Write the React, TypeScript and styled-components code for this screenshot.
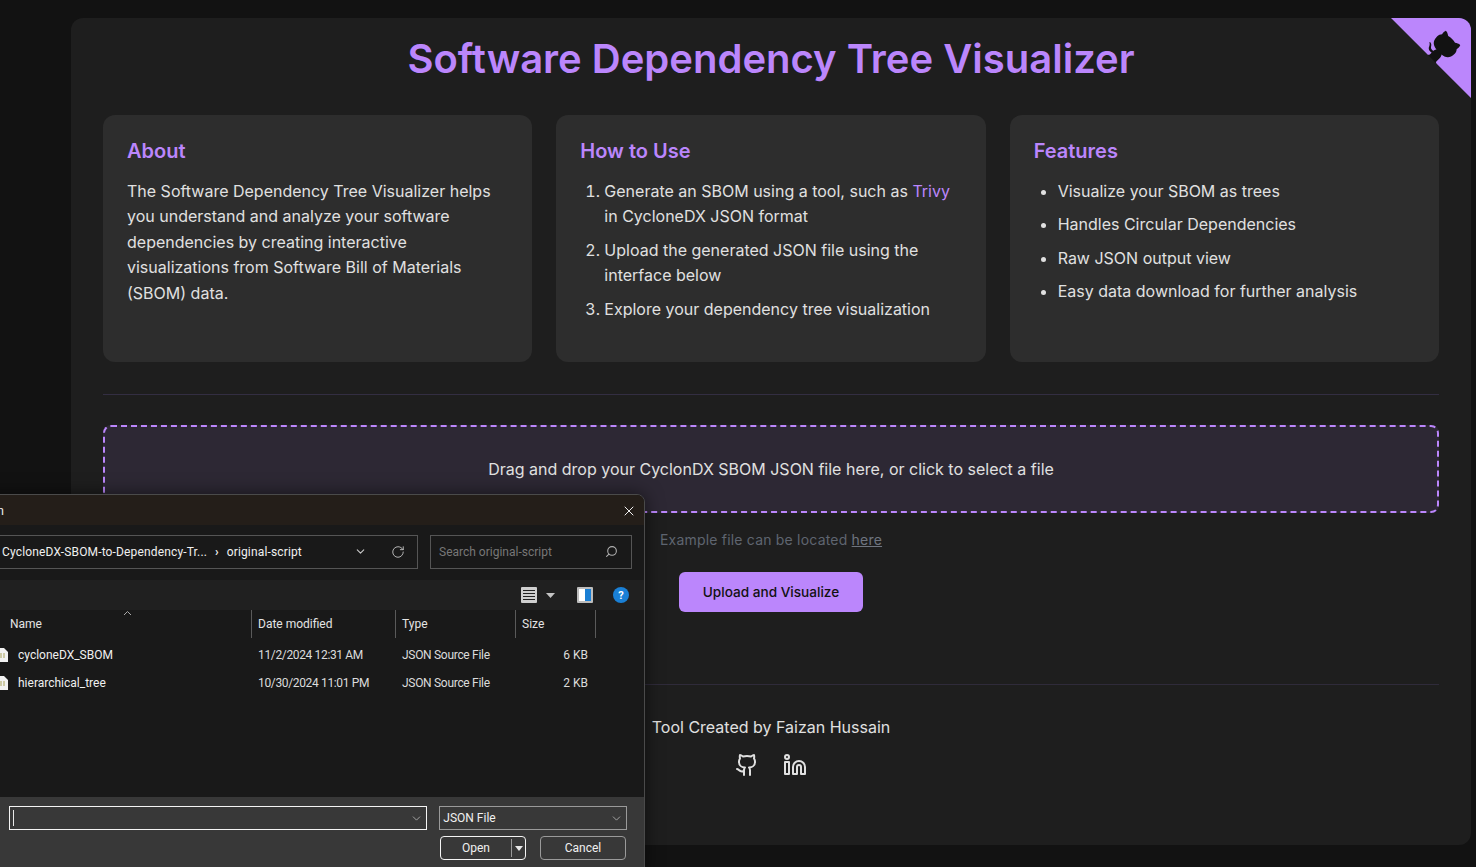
import React from "react";
import styled, { createGlobalStyle } from "styled-components";
import { Github, Linkedin, RotateCw, Search, ChevronDown, X } from "lucide-react";

const GlobalStyle = createGlobalStyle`
  html, body {
    margin: 0;
    padding: 0;
    height: 100%;
    overflow: hidden;
    background: #121212;
  }
  * {
    box-sizing: border-box;
  }
`;

const Page = styled.div`
  position: relative;
  width: 1476px;
  height: 867px;
  overflow: hidden;
  padding: 18px 5px 22px 71px;
  background: #121212;
  font-family: Inter, "Liberation Sans", sans-serif;
  color: #e0e0e0;
`;

const Container = styled.main`
  position: relative;
  height: 827px;
  padding: 0 32px;
  border-radius: 12px;
  background: #1e1e1e;
  overflow: hidden;
`;

const CornerSvg = styled.svg`
  position: absolute;
  top: 0;
  right: 0;
  width: 80px;
  height: 80px;
`;

const Title = styled.h1`
  margin: 0;
  padding-top: 17px;
  height: 97px;
  font-size: 40px;
  line-height: 48px;
  font-weight: 600;
  text-align: center;
  color: #bb86fc;
`;

const CardGrid = styled.section`
  display: grid;
  grid-template-columns: repeat(3, 1fr);
  gap: 24px;
`;

const Card = styled.article`
  height: 247px;
  padding: 24px;
  border-radius: 12px;
  background: #2d2d2d;
`;

const CardTitle = styled.h2`
  margin: 0 0 15.6px;
  font-size: 20px;
  line-height: 24px;
  font-weight: 600;
  color: #bb86fc;
`;

const Paragraph = styled.p`
  margin: 0;
  font-size: 16px;
  line-height: 25.6px;
`;

const List = styled.ol<{ $bullets?: boolean }>`
  margin: 0;
  padding-left: 24px;
  font-size: 16px;
  line-height: 25.6px;
  list-style: ${(p) => (p.$bullets ? "disc" : "decimal")};
  li {
    margin-bottom: 8px;
  }
`;

const Accent = styled.a`
  color: #bb86fc;
`;

const Divider = styled.hr`
  margin: 32px 0 30px;
  border: 0;
  border-top: 1px solid #332e42;
`;

const DropZone = styled.div`
  display: flex;
  align-items: center;
  justify-content: center;
  height: 88px;
  border: 2px dashed #bb86fc;
  border-radius: 8px;
  background: rgba(187, 134, 252, 0.1);
  font-size: 16px;
`;

const ExampleText = styled.p`
  margin: 17px 0 0;
  font-size: 14px;
  line-height: 20px;
  letter-spacing: 0.2px;
  text-align: center;
  color: #5f6570;
  a {
    color: #6f7580;
    text-decoration: underline;
  }
`;

const UploadRow = styled.div`
  display: flex;
  justify-content: center;
  margin-top: 22px;
`;

const UploadButton = styled.button`
  width: 184px;
  height: 40px;
  border: 0;
  border-radius: 6px;
  background: #bb86fc;
  color: #121212;
  font-family: inherit;
  font-size: 13.6px;
  font-weight: 500;
`;

const FooterDivider = styled.hr`
  margin: 72px 0 0;
  border: 0;
  border-top: 1px solid #2f2b3a;
`;

const Credit = styled.p`
  margin: 31px 0 0;
  font-size: 16px;
  line-height: 22px;
  text-align: center;
`;

const SocialRow = styled.div`
  display: flex;
  justify-content: center;
  gap: 24px;
  margin-top: 15px;
  color: #e0e0e0;
`;

/* file picker window lying over the page */
const Dialog = styled.div`
  position: absolute;
  left: -100px;
  top: 494px;
  width: 745px;
  height: 380px;
  display: flex;
  flex-direction: column;
  border: 1px solid #4a4a4a;
  border-radius: 8px 8px 0 0;
  background: #191919;
  box-shadow: 0 0 18px rgba(0, 0, 0, 0.55);
  font-family: Roboto, "Noto Sans", sans-serif;
  font-size: 12px;
  color: #f0f0f0;
  overflow: hidden;
`;

const TitleBar = styled.div`
  flex: none;
  height: 30px;
  display: flex;
  align-items: center;
  justify-content: space-between;
  padding: 1px 7px 0 75px;
  background: #241e19;
  svg {
    color: #f0f0f0;
  }
`;

const AddressRow = styled.div`
  flex: none;
  height: 55px;
  display: flex;
  align-items: center;
  gap: 12px;
  padding: 0 12px 1px 0;
`;

const AddressBox = styled.div`
  flex: none;
  width: 517px;
  height: 34px;
  display: flex;
  align-items: center;
  padding: 0 12px 1px 100px;
  border: 1px solid #555;
  color: #f0f0f0;
`;

const Crumb = styled.span`
  white-space: nowrap;
  letter-spacing: 0.15px;
`;

const CrumbSep = styled.span`
  margin: 0 8px;
  font-weight: 700;
`;

const AddressTools = styled.div`
  margin-left: auto;
  display: flex;
  align-items: center;
  gap: 24px;
  color: #c8c8c8;
`;

const SearchBox = styled.div`
  flex: 1;
  height: 34px;
  display: flex;
  align-items: center;
  justify-content: space-between;
  padding: 0 13px 1px 8px;
  border: 1px solid #555;
  color: #777;
  svg {
    color: #b0b0b0;
    transform: scaleX(-1);
  }
`;

const Toolbar = styled.div`
  flex: none;
  height: 30px;
  display: flex;
  align-items: center;
  justify-content: flex-end;
  padding-right: 15px;
  background: #202020;
`;

const ToolIcon = styled.svg<{ $gap?: number }>`
  display: block;
  margin-left: ${(p) => p.$gap ?? 0}px;
`;

const FileGrid = styled.div`
  display: grid;
  grid-template-columns: 351px 144px 120px 80px;
`;

const HeaderCell = styled.div<{ $sorted?: boolean }>`
  position: relative;
  height: 28px;
  display: flex;
  align-items: center;
  padding-left: ${(p) => (p.$sorted ? "109px" : "6px")};
  border-right: 1px solid #5a5a5a;
  color: #e4e4e4;
`;

const SortCaret = styled.svg`
  position: absolute;
  right: 119px;
  top: 0;
`;

const Rows = styled(FileGrid)`
  padding-top: 3px;
  flex: 1;
  align-content: start;
  grid-auto-rows: 28px;
`;

const NameCell = styled.div`
  display: flex;
  align-items: center;
  gap: 10px;
  padding-left: 96px;
`;

const Cell = styled.div<{ $right?: boolean; $tight?: number }>`
  display: flex;
  align-items: center;
  justify-content: ${(p) => (p.$right ? "flex-end" : "flex-start")};
  padding: ${(p) => (p.$right ? "0 8px 0 0" : "0 0 0 6px")};
  letter-spacing: ${(p) => p.$tight ?? 0}px;
  color: #dcdcdc;
`;

const BottomBar = styled.div`
  flex: none;
  height: 76px;
  padding: 9px 17px 0 108px;
  background: #383838;
`;

const FieldRow = styled.div`
  display: flex;
  gap: 12px;
`;

const Combo = styled.div<{ $active?: boolean }>`
  height: 24px;
  width: ${(p) => (p.$active ? "419px" : "188px")};
  display: flex;
  align-items: center;
  justify-content: space-between;
  padding: 0 3px;
  border: 1px solid ${(p) => (p.$active ? "#f4f4f4" : "#9a9a9a")};
  svg {
    color: #b8b8b8;
  }
`;

const Caret = styled.span`
  width: 1px;
  height: 16px;
  background: #e8e8e8;
`;

const ButtonRow = styled.div`
  display: flex;
  justify-content: flex-end;
  gap: 14px;
  margin: 6px 1px 0 0;
`;

const DialogButton = styled.div<{ $primary?: boolean }>`
  position: relative;
  width: 86px;
  height: 24px;
  display: flex;
  align-items: center;
  justify-content: center;
  padding-right: ${(p) => (p.$primary ? "14px" : "0")};
  border: 1px solid ${(p) => (p.$primary ? "#f4f4f4" : "#9a9a9a")};
  border-radius: 4px;
`;

const SplitArrow = styled.span`
  position: absolute;
  right: 0;
  top: 2px;
  bottom: 2px;
  width: 14px;
  display: flex;
  align-items: center;
  justify-content: center;
  border-left: 1px solid #9a9a9a;
  &::after {
    content: "";
    border-left: 4px solid transparent;
    border-right: 4px solid transparent;
    border-top: 5px solid #e8e8e8;
  }
`;

const FileIcon = () => (
  <svg width="11" height="14" viewBox="0 0 11 14">
    <path d="M0 0h7l4 4v10H0z" fill="#f2f2f2" />
    <path d="M4 5v5M7 5v5" stroke="#a9a35a" strokeWidth="1" />
  </svg>
);

const files = [
  { name: "cycloneDX_SBOM", date: "11/2/2024 12:31 AM", type: "JSON Source File", size: "6 KB" },
  { name: "hierarchical_tree", date: "10/30/2024 11:01 PM", type: "JSON Source File", size: "2 KB" },
];

const FileDialog = () => (
  <Dialog>
    <TitleBar>
      <span>Open</span>
      <X size={16} strokeWidth={1.5} />
    </TitleBar>
    <AddressRow>
      <AddressBox>
        <Crumb>CycloneDX-SBOM-to-Dependency-Tr...</Crumb>
        <CrumbSep>›</CrumbSep>
        <Crumb>original-script</Crumb>
        <AddressTools>
          <ChevronDown size={13} />
          <RotateCw size={14} strokeWidth={1.5} />
        </AddressTools>
      </AddressBox>
      <SearchBox>
        <span>Search original-script</span>
        <Search size={13} strokeWidth={2} />
      </SearchBox>
    </AddressRow>
    <Toolbar>
      <ToolIcon width="16" height="16" viewBox="0 0 16 16">
        <rect width="16" height="16" rx="1" fill="#d0d0d0" />
        <path d="M2 3.5h12M2 6.5h12M2 9.5h12M2 12.5h12" stroke="#222" strokeWidth="1" />
      </ToolIcon>
      <ToolIcon $gap={9} width="9" height="5" viewBox="0 0 9 5">
        <path d="M0 0h9L4.5 5z" fill="#c4c4c4" />
      </ToolIcon>
      <ToolIcon $gap={22} width="16" height="16" viewBox="0 0 16 16">
        <rect width="16" height="16" rx="1" fill="#bdbdbd" />
        <rect x="2" y="2" width="12" height="12" fill="#fff" />
        <rect x="8" y="2" width="6" height="12" fill="#1a7fd4" />
      </ToolIcon>
      <ToolIcon $gap={20} width="16" height="16" viewBox="0 0 16 16">
        <circle cx="8" cy="8" r="8" fill="#1a80d6" />
        <text x="8" y="12" textAnchor="middle" fontSize="11" fontWeight="700" fill="#fff">?</text>
      </ToolIcon>
    </Toolbar>
    <FileGrid>
      <HeaderCell $sorted>
        Name
        <SortCaret width="9" height="6" viewBox="0 0 9 6">
          <path d="M1 5l3.5-3.5L8 5" fill="none" stroke="#aaa" />
        </SortCaret>
      </HeaderCell>
      <HeaderCell>Date modified</HeaderCell>
      <HeaderCell>Type</HeaderCell>
      <HeaderCell>Size</HeaderCell>
    </FileGrid>
    <Rows>
      {files.map((f) => (
        <React.Fragment key={f.name}>
          <NameCell>
            <FileIcon />
            {f.name}
          </NameCell>
          <Cell $tight={-0.35}>{f.date}</Cell>
          <Cell $tight={-0.3}>{f.type}</Cell>
          <Cell $right>{f.size}</Cell>
        </React.Fragment>
      ))}
    </Rows>
    <BottomBar>
      <FieldRow>
        <Combo $active>
          <Caret />
          <ChevronDown size={13} strokeWidth={1.5} />
        </Combo>
        <Combo>
          JSON File
          <ChevronDown size={13} strokeWidth={1.5} />
        </Combo>
      </FieldRow>
      <ButtonRow>
        <DialogButton $primary>
          Open
          <SplitArrow />
        </DialogButton>
        <DialogButton>Cancel</DialogButton>
      </ButtonRow>
    </BottomBar>
  </Dialog>
);

export default function App() {
  return (
    <>
      <GlobalStyle />
      <Page>
        <Container>
          <CornerSvg viewBox="0 0 250 250" aria-hidden="true">
            <path d="M0,0 L115,115 L130,115 L142,142 L250,250 L250,0 Z" fill="#bb86fc" />
            <path
              d="M128.3,109.0 C113.8,99.7 119.0,89.6 119.0,89.6 C122.0,82.7 120.5,78.6 120.5,78.6 C119.2,72.0 123.4,76.3 123.4,76.3 C127.3,80.9 125.5,87.3 125.5,87.3 C122.9,97.6 130.6,101.9 134.4,103.2"
              fill="#121212"
            />
            <path
              d="M115.0,115.0 C114.9,115.1 118.7,116.5 119.8,115.4 L133.7,101.6 C136.9,99.2 139.9,98.4 142.2,98.6 C133.8,88.0 127.5,74.4 143.8,58.0 C148.5,53.4 154.0,51.2 159.7,51.0 C160.3,49.4 163.2,43.6 171.4,40.1 C171.4,40.1 176.1,42.5 178.8,56.2 C183.1,58.6 187.2,61.8 190.9,65.4 C194.5,69.0 197.7,73.2 200.1,77.6 C213.8,80.2 216.3,84.9 216.3,84.9 C212.7,93.1 206.9,96.0 205.4,96.6 C205.1,102.4 203.0,107.8 198.3,112.5 C181.9,128.9 168.3,122.5 157.7,114.1 C157.9,116.9 156.7,120.9 152.7,124.9 L141.0,136.5 C139.8,137.7 141.6,141.9 141.8,141.8 Z"
              fill="#121212"
            />
          </CornerSvg>
          <Title>Software Dependency Tree Visualizer</Title>
          <CardGrid>
            <Card>
              <CardTitle>About</CardTitle>
              <Paragraph>
                The Software Dependency Tree Visualizer helps you understand and analyze your
                software dependencies by creating interactive visualizations from Software Bill of
                Materials (SBOM) data.
              </Paragraph>
            </Card>
            <Card>
              <CardTitle>How to Use</CardTitle>
              <List>
                <li>
                  Generate an SBOM using a tool, such as <Accent>Trivy</Accent> in CycloneDX JSON
                  format
                </li>
                <li>Upload the generated JSON file using the interface below</li>
                <li>Explore your dependency tree visualization</li>
              </List>
            </Card>
            <Card>
              <CardTitle>Features</CardTitle>
              <List as="ul" $bullets>
                <li>Visualize your SBOM as trees</li>
                <li>Handles Circular Dependencies</li>
                <li>Raw JSON output view</li>
                <li>Easy data download for further analysis</li>
              </List>
            </Card>
          </CardGrid>
          <Divider />
          <DropZone>Drag and drop your CyclonDX SBOM JSON file here, or click to select a file</DropZone>
          <ExampleText>
            Example file can be located <a>here</a>
          </ExampleText>
          <UploadRow>
            <UploadButton>Upload and Visualize</UploadButton>
          </UploadRow>
          <FooterDivider />
          <Credit>Tool Created by Faizan Hussain</Credit>
          <SocialRow>
            <Github size={24} strokeWidth={2} />
            <Linkedin size={24} strokeWidth={2} />
          </SocialRow>
        </Container>
        <FileDialog />
      </Page>
    </>
  );
}
